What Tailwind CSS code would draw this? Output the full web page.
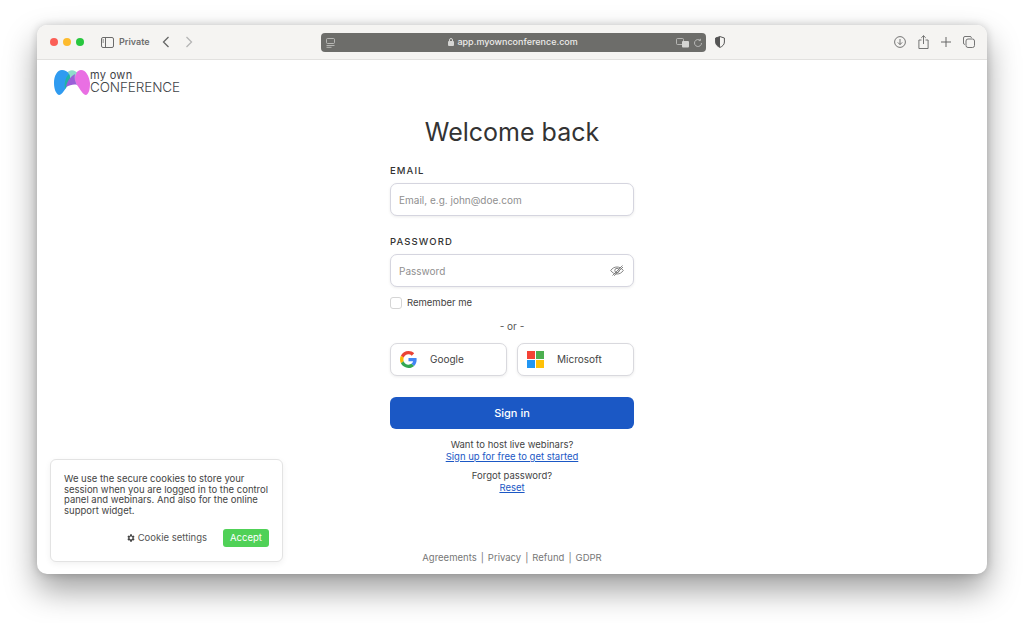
<!DOCTYPE html>
<html lang="en">
<head>
    <meta charset="UTF-8">
    <meta name="viewport" content="width=device-width, initial-scale=1.0">
    <title>Sign in</title>
    <script src="https://cdn.jsdelivr.net/npm/@tailwindcss/browser@4"></script>
</head>
<body class="bg-white h-[623px] overflow-hidden font-['Inter',sans-serif] text-[#3a3a3a]">
    <!-- browser window -->
    <div class="relative ml-[37px] mt-[25px] w-[950px] h-[549px] flex flex-col rounded-[10px] bg-white shadow-[0_16px_32px_rgba(0,0,0,0.38),0_0_8px_rgba(0,0,0,0.18)] overflow-visible">
        <!-- toolbar -->
        <div class="h-[35px] shrink-0 flex items-center bg-[#f5f4f2] border-b border-[#e2e1df] rounded-t-[10px] pl-[13px] pr-[12px]">
            <div class="flex gap-[5px]">
                <span class="w-2 h-2 rounded-full bg-[#fb5f57]"></span>
                <span class="w-2 h-2 rounded-full bg-[#fdbb2e]"></span>
                <span class="w-2 h-2 rounded-full bg-[#28c73f]"></span>
            </div>
            <svg class="ml-[17px]" width="13" height="11" viewBox="0 0 13 11" fill="none" stroke="#6b6b6b" stroke-width="1"><rect x="0.5" y="0.5" width="12" height="10" rx="1.5"/><path d="M4.5 .5v10M1.5 3h1.5M1.5 5h1.5"/></svg>
            <span class="ml-[5px] text-[9px] font-semibold text-[#6e6e6e]">Private</span>
            <svg class="ml-[12px]" width="8" height="12" viewBox="0 0 8 12" fill="none" stroke="#666" stroke-width="1.3"><path d="M6.5 1 1.5 6l5 5"/></svg>
            <svg class="ml-[15px]" width="8" height="12" viewBox="0 0 8 12" fill="none" stroke="#b5b5b5" stroke-width="1.3"><path d="M1.5 1l5 5-5 5"/></svg>

            <!-- address bar -->
            <div class="relative ml-[128px] w-[385px] h-[19px] rounded-[4px] bg-[#6d6d6a] flex items-center justify-center">
                <svg class="absolute left-[5px] top-[5px]" width="9" height="10" viewBox="0 0 9 10" fill="none" stroke="#c9c9c7" stroke-width="0.8"><rect x="0.5" y="0.5" width="8" height="5" rx="1"/><path d="M0.5 7.5h8M0.5 9.3h5"/></svg>
                <svg class="mr-[3px]" width="6" height="8" viewBox="0 0 6 8"><rect y="3" width="6" height="5" rx="1" fill="#d5d5d3"/><path d="M1.5 3.5V2a1.5 1.5 0 0 1 3 0v1.5" fill="none" stroke="#d5d5d3"/></svg>
                <span class="text-[9px] font-medium text-[#ecebe9]">app.myownconference.com</span>
                <svg class="absolute right-[16px] top-[5px]" width="14" height="10" viewBox="0 0 14 10"><rect x="0.5" y="0.5" width="7" height="6" rx="1" fill="none" stroke="#c9c9c7" stroke-width="0.8"/><rect x="6" y="3" width="7" height="6.5" rx="1" fill="#d5d5d3"/></svg>
                <svg class="absolute right-[3px] top-[5px]" width="10" height="10" viewBox="0 0 10 10" fill="none" stroke="#c0c0be" stroke-width="0.9"><path d="M8.5 5a3.5 3.5 0 1 1-1.3-2.7M7.4 .8v1.8H5.6"/></svg>
            </div>
            <svg class="ml-[9px]" width="10" height="12" viewBox="0 0 10 12"><path d="M5 .6 9.4 2v4c0 2.7-2 4.400-4.400 5.400C2.600 10.400.6 8.700.6 6V2Z" fill="none" stroke="#555" stroke-width="1"/><path d="M5 .6V11.400C2.600 10.400.6 8.700.6 6V2Z" fill="#555"/></svg>

            <!-- right side actions -->
            <div class="ml-auto flex items-center gap-[12px] text-[#666]">
                <svg width="12" height="12" viewBox="0 0 12 12" fill="none" stroke="#666" stroke-width="0.9"><circle cx="6" cy="6" r="5.400"/><path d="M6 3v5.500M3.800 6.400 6 8.600l2.200-2.200"/></svg>
                <svg width="11" height="14" viewBox="0 0 11 14" fill="none" stroke="#666" stroke-width="0.9"><path d="M3.500 5H.9v8.500h9.200V5H7.500M5.500 9V.8M3.300 2.800 5.500.7l2.200 2.100"/></svg>
                <svg width="10" height="10" viewBox="0 0 10 10" fill="none" stroke="#666" stroke-width="1"><path d="M5 0v10M0 5h10"/></svg>
                <svg width="12" height="12" viewBox="0 0 12 12" fill="none" stroke="#666" stroke-width="0.9"><rect x="3" y="3" width="8.500" height="8.500" rx="2"/><path d="M1.800 8.500A1.500 1.500 0 0 1 .5 7V2A1.500 1.500 0 0 1 2 .5h5A1.500 1.500 0 0 1 8.500 1.800"/></svg>
            </div>
        </div>

        <!-- page -->
        <div class="flex-1 flex flex-col">
            <!-- logo -->
            <div class="flex items-center h-[28px] mt-[8px] ml-[17px]">
                <svg width="36" height="28" viewBox="0 0 36 28">
                    <path d="M12 6C15 1 21 1 24 6L22 16H14Z" fill="#8fdccb"/>
                    <path d="M8 2C3 2 0 8 0 15c0 6 2 11 5 12 3 0 6-6 9-10 2-3 3-7 1-11C13 3 11 2 8 2Z" fill="#2f9bf0"/>
                    <path d="M27 2c5 0 8 6 9 13 0 6-1 11-4 12-3 0-6-6-9-10-2-3-3-7-1-11 1-3 3-4 5-4Z" fill="#e96fe3"/>
                    <path d="M15 6c2 4 1 8-1 11l-3 4c-1-5 0-11 4-15Z" fill="#22b3a4"/>
                    <path d="M21 6c-4 2-8 7-9 13 4-2 8-3 11-2-2-3-3-7-2-11Z" fill="#9a5fd8"/>
                </svg>
                <div class="flex flex-col text-[#3f4448] leading-none">
                    <span class="text-[11px] leading-[11px] tracking-[0.3px]">my own</span>
                    <span class="text-[13.500px] leading-[13px] font-light tracking-[-0.1px]">CONFERENCE</span>
                </div>
            </div>

            <!-- sign in form -->
            <div class="w-[244px] mx-auto flex flex-col">
                <h1 class="mt-[17px] text-center text-[25px] leading-[38px] font-normal text-[#333] whitespace-nowrap">Welcome back</h1>

                <label class="mt-[14px] text-[9.500px] leading-[12px] font-medium tracking-[1.100px] text-[#333]">EMAIL</label>
                <input type="text" placeholder="Email, e.g. john@doe.com" class="mt-[6px] h-[33px] px-[8px] bg-white rounded-[7px] border border-[#d5d5df] shadow-[0_1px_3px_rgba(0,0,0,0.08)] text-[10px] placeholder:text-[#8f8f8f] outline-none">

                <label class="mt-[20px] text-[9.500px] leading-[12px] font-medium tracking-[1.100px] text-[#333]">PASSWORD</label>
                <div class="relative mt-[6px]">
                    <input type="password" placeholder="Password" class="w-full h-[33px] px-[8px] bg-white rounded-[7px] border border-[#d5d5df] shadow-[0_1px_3px_rgba(0,0,0,0.08)] text-[10px] placeholder:text-[#8f8f8f] outline-none">
                    <svg class="absolute right-[10px] top-[10px]" width="14" height="13" viewBox="0 0 14 13" fill="none" stroke="#777" stroke-width="0.9"><path d="M.7 6.500C2.500 4 4.500 3 7 3s4.500 1 6.300 3.500C11.500 9 9.500 10 7 10S2.500 9 .7 6.500Z"/><circle cx="7" cy="6.500" r="2.200"/><path d="M2.500 11.500 12.500 1.500M4 11.800 13 3"/></svg>
                </div>

                <label class="mt-[10px] flex items-center gap-[5px] text-[9.500px] leading-[12px] text-[#444]">
                    <span class="w-3 h-3 rounded-[3px] border border-[#d5d5d5] bg-white"></span>
                    Remember me
                </label>

                <div class="mt-[11px] text-center text-[10px] leading-[12px] text-[#555]">- or -</div>

                <div class="mt-[11px] grid grid-cols-2 gap-[10px]">
                    <button class="h-[33px] flex items-center pl-[9px] rounded-[7px] border border-[#d9d9de] bg-white shadow-[0_1px_3px_rgba(0,0,0,0.08)] text-[10px] text-[#444]">
                        <svg width="17" height="17" viewBox="0 0 48 48"><path fill="#EA4335" d="M24 9.500c3.500 0 6.700 1.200 9.200 3.600l6.900-6.900C35.900 2.400 30.500 0 24 0 14.600 0 6.500 5.400 2.600 13.200l8 6.200C12.400 13.700 17.700 9.500 24 9.500z"/><path fill="#4285F4" d="M46.900 24.500c0-1.600-.1-3.100-.4-4.500H24v9h12.900c-.6 3-2.200 5.500-4.800 7.200l7.700 6c4.500-4.200 7.100-10.300 7.100-17.700z"/><path fill="#FBBC05" d="M10.500 28.600c-.5-1.500-.8-3-.8-4.600s.3-3.200.8-4.600l-8-6.200C.9 16.500 0 20.100 0 24s.9 7.500 2.600 10.800l7.900-6.200z"/><path fill="#34A853" d="M24 48c6.500 0 11.900-2.100 15.900-5.800l-7.700-6c-2.200 1.400-4.900 2.300-8.200 2.300-6.300 0-11.600-4.200-13.500-9.900l-8 6.200C6.500 42.600 14.600 48 24 48z"/></svg>
                        <span class="ml-[13px]">Google</span>
                    </button>
                    <button class="h-[33px] flex items-center pl-[9px] rounded-[7px] border border-[#d9d9de] bg-white shadow-[0_1px_3px_rgba(0,0,0,0.08)] text-[10px] text-[#444]">
                        <span class="grid grid-cols-2 gap-[1px] w-[17px] h-[17px]">
                            <span class="bg-[#f44336]"></span>
                            <span class="bg-[#4caf50]"></span>
                            <span class="bg-[#2196f3]"></span>
                            <span class="bg-[#ffc107]"></span>
                        </span>
                        <span class="ml-[13px]">Microsoft</span>
                    </button>
                </div>

                <button class="mt-[21px] h-[32px] rounded-[6px] bg-[#1b58c5] text-white text-[11px] font-medium">Sign in</button>

                <p class="mt-[10px] text-center text-[9.500px] leading-[12px] text-[#444]">
                    Want to host live webinars?<br>
                    <a href="#" class="text-[#1b58c5] underline">Sign up for free to get started</a>
                </p>
                <p class="mt-[7px] text-center text-[9.500px] leading-[12px] text-[#444]">
                    Forgot password?<br>
                    <a href="#" class="text-[#1b58c5] underline">Reset</a>
                </p>
            </div>

            <div class="mt-auto mb-[10px] flex justify-center gap-[4px] text-[9.500px] leading-[12px] text-[#777]">
                <a href="#">Agreements</a><span>|</span><a href="#">Privacy</a><span>|</span><a href="#">Refund</a><span>|</span><a href="#">GDPR</a>
            </div>
        </div>

        <!-- cookie notice -->
        <div class="absolute left-[13px] top-[434px] w-[233px] h-[103px] rounded-[6px] border border-[#e3e3e3] bg-white shadow-[0_2px_6px_rgba(0,0,0,0.06)] pl-[13px] pr-[13px] pt-[14px]">
            <p class="text-[9.500px] leading-[10.500px] text-[#444]">We use the secure cookies to store your session when you are logged in to the control panel and webinars. And also for the online support widget.</p>
            <div class="mt-[13px] flex items-center justify-end">
                <svg width="10" height="10" viewBox="0 0 24 24" fill="#444"><path d="M19.400 13a7.700 7.700 0 0 0 0-2l2.100-1.600-2-3.500-2.500 1a7.500 7.500 0 0 0-1.700-1L15 3.200h-4l-.4 2.700a7.500 7.500 0 0 0-1.700 1l-2.500-1-2 3.500L6.500 11a7.700 7.700 0 0 0 0 2l-2.100 1.600 2 3.500 2.500-1a7.500 7.500 0 0 0 1.700 1l.4 2.700h4l.4-2.700a7.500 7.500 0 0 0 1.700-1l2.500 1 2-3.500ZM13 15.500a3.500 3.500 0 1 1 0-7 3.500 3.500 0 0 1 0 7Z" transform="translate(-1 0)"/></svg>
                <span class="ml-[2px] text-[9.500px] text-[#555]">Cookie settings</span>
                <button class="ml-[16px] w-[46px] h-[18px] rounded-[3px] bg-[#50d157] text-white text-[9.500px]">Accept</button>
            </div>
        </div>
    </div>
</body>
</html>
